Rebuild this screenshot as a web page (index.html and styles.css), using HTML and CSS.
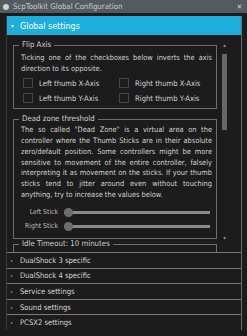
FILE: index.html
```html
<!DOCTYPE html>
<html lang="en">
<head>
  <meta charset="UTF-8" />
  <title>ScpToolkit Global Configuration</title>
  <link rel="stylesheet" href="styles.css">
</head>
<body>
  <div class="titlebar">
    <span class="app-icon"></span>
    <span class="title">ScpToolkit Global Configuration</span>
    <span class="close">&#x2715;</span>
  </div>

  <div class="window">
    <div class="accordion">
      <!-- Expanded section -->
      <div class="acc-header active"><span class="arrow">&#9662;</span>Global settings</div>
      <div class="acc-body">
        <div class="scroll-content">
          <fieldset class="group flip">
            <legend>Flip Axis</legend>
            <p>Ticking one of the checkboxes below inverts the axis direction to its opposite.</p>
            <div class="checks">
              <label><span class="box"></span>Left thumb X-Axis</label>
              <label><span class="box"></span>Right thumb X-Axis</label>
              <label><span class="box"></span>Left thumb Y-Axis</label>
              <label><span class="box"></span>Right thumb Y-Axis</label>
            </div>
          </fieldset>

          <fieldset class="group deadzone">
            <legend>Dead zone threshold</legend>
            <p>The so called "Dead Zone" is a virtual area on the controller where the Thumb Sticks are in their absolute zero/default position. Some controllers might be more sensitive to movement of the entire controller, falsely interpreting it as movement on the sticks. If your thumb sticks tend to jitter around even without touching anything, try to increase the values below.</p>
            <div class="slider-row">
              <span class="slider-label">Left Stick</span>
              <div class="slider"><span class="knob"></span></div>
            </div>
            <div class="slider-row">
              <span class="slider-label">Right Stick</span>
              <div class="slider"><span class="knob"></span></div>
            </div>
          </fieldset>

          <fieldset class="group idle">
            <legend>Idle Timeout: 10 minutes</legend>
            <p>&nbsp;</p>
          </fieldset>
        </div>
        <div class="scrollbar">
          <span class="sb-arrow">&#9652;</span>
          <div class="sb-track"><div class="sb-thumb"></div></div>
          <span class="sb-arrow">&#9662;</span>
        </div>
      </div>

      <!-- Collapsed sections -->
      <div class="acc-header"><span class="arrow">&#9656;</span>DualShock 3 specific</div>
      <div class="acc-header"><span class="arrow">&#9656;</span>DualShock 4 specific</div>
      <div class="acc-header"><span class="arrow">&#9656;</span>Service settings</div>
      <div class="acc-header"><span class="arrow">&#9656;</span>Sound settings</div>
      <div class="acc-header"><span class="arrow">&#9656;</span>PCSX2 settings</div>
    </div>
  </div>
</body>
</html>
```

FILE: styles.css
```css
* {
  box-sizing: border-box;
}
body {
  margin: 0;
  background: #1c1c1c;
  font-family: "DejaVu Sans Condensed", "Liberation Sans", sans-serif;
  color: #d2d2d2;
  width: 247px;
  height: 336px;
  overflow: hidden;
  display: flex;
  flex-direction: column;
}

/* Title bar */
.titlebar {
  height: 13px;
  flex: none;
  background: #555a61;
  display: flex;
  align-items: center;
  padding: 0 5px 0 3px;
  font-size: 7.8px;
  color: #c8ccd0;
}
.app-icon {
  width: 6px;
  height: 6px;
  border-radius: 50%;
  background: #cfd2d6;
  margin-right: 4px;
}
.title {
  flex: 1;
}
.close {
  font-size: 7px;
  color: #d8dadc;
}

/* Accordion */
.window {
  flex: 1;
  min-height: 0;
  padding: 3px 5px 6px 6px;
  display: flex;
}
.accordion {
  flex: 1;
  display: flex;
  flex-direction: column;
  border-right: 1px solid #6a6a6a;
  border-left: 1px solid #3a3a3a;
}
.acc-header {
  height: 15.6px;
  flex: none;
  display: flex;
  align-items: center;
  font-size: 7.6px;
  color: #d6d6d6;
  border-top: 1px solid #7a7a7a;
  padding-left: 4px;
}
.acc-header .arrow {
  font-size: 4px;
  width: 9px;
  color: #999;
}
.acc-header.active {
  height: 19px;
  background: #1eaedb;
  color: #fff;
  font-size: 8.9px;
  border-top: none;
}
.acc-header.active .arrow {
  color: #fff;
  font-size: 6px;
}

.acc-body {
  flex: 1;
  min-height: 0;
  display: flex;
  overflow: hidden;
}
.scroll-content {
  width: 210px;
  padding: 5px 0 0 6px;
}

/* Group boxes */
.group {
  border: 1px solid #6e6e6e;
  margin: 0;
  padding: 0 4px 5px 7px;
}
.group legend {
  font-size: 7.8px;
  line-height: 10px;
  padding: 0 3px;
  margin-left: -2px;
  color: #d0d0d0;
}
.group p {
  margin: 3px 0 4px;
  font-size: 7.4px;
  line-height: 10.7px;
  text-align: justify;
}
.flip {
  margin-bottom: 5px;
}
.deadzone p {
  margin: 1px 0 5px;
}
.idle p {
  margin: 0;
}

.checks {
  display: grid;
  grid-template-columns: 96px 1fr;
  row-gap: 5px;
  padding-left: 2px;
  font-size: 7.6px;
  white-space: nowrap;
}
.checks label {
  display: flex;
  align-items: center;
  height: 10px;
}
.box {
  width: 10px;
  height: 10px;
  border: 1px solid #454545;
  margin-right: 6px;
}

.slider-row {
  display: flex;
  align-items: center;
  height: 14px;
  font-size: 6.8px;
  white-space: nowrap;
}
.slider-label {
  width: 37px;
  text-align: right;
  margin-right: 6px;
  color: #bcbcbc;
}
.slider {
  flex: 1;
  height: 3px;
  background: #8a8a8a;
  position: relative;
  margin-right: 2px;
}
.knob {
  position: absolute;
  left: 0;
  top: -3px;
  width: 9px;
  height: 9px;
  border-radius: 50%;
  background: #6e6e6e;
}

/* Scrollbar */
.scrollbar {
  flex: 1;
  display: flex;
  flex-direction: column;
  align-items: flex-start;
  padding: 6px 0 10px 5px;
}
.sb-arrow {
  width: 5px;
  text-align: center;
  font-size: 6px;
  line-height: 8px;
  color: #888;
}
.sb-track {
  flex: 1;
}
.sb-thumb {
  width: 5px;
  height: 76px;
  background: #686868;
  margin-top: 5px;
}
```
